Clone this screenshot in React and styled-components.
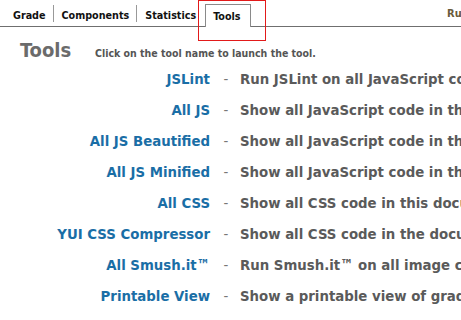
import React from "react";
import styled, { createGlobalStyle } from "styled-components";

const GlobalStyle = createGlobalStyle`
  body {
    margin: 0;
    background: #fff;
    font-family: "DejaVu Sans Condensed", "DejaVu Sans", sans-serif;
    font-weight: bold;
    overflow: hidden;
  }
`;

const Page = styled.div`
  width: 461px;
  height: 320px;
  overflow: hidden;
`;

const TabBar = styled.div`
  display: flex;
  align-items: flex-end;
  height: 26px;
  border-bottom: 1px solid #6f6f6f;
  padding-left: 5px;
`;

const Tab = styled.div`
  position: relative;
  font-size: 10.7px;
  color: #111;
  padding: 0 8px;
  height: 22px;
  line-height: 24px;

  &::after {
    content: "";
    display: ${(p) => (p.last ? "none" : "block")};
    position: absolute;
    right: 0;
    top: 1px;
    height: 17px;
    border-right: 1px solid #999;
  }
`;

const ActiveTab = styled.div`
  position: relative;
  font-size: 10.7px;
  color: #111;
  height: 22px;
  line-height: 23px;
  margin-left: 1px;
  margin-bottom: -1px;
  padding: 0 9px 0 7px;
  background: #fff;
  border: 1px solid #8a8a8a;
  border-bottom: none;
`;

const Highlight = styled.div`
  position: absolute;
  left: -8px;
  top: -5px;
  width: 66px;
  height: 39px;
  border: 1px solid #e21a1a;
  pointer-events: none;
`;

const Rules = styled.div`
  margin-left: auto;
  margin-right: -38px;
  align-self: center;
  font-size: 11px;
  color: #6a5a3a;
  white-space: nowrap;
`;

const Header = styled.div`
  display: flex;
  align-items: baseline;
  padding: 11px 0 0 20px;
  height: 32px;
  box-sizing: border-box;
`;

const Title = styled.h1`
  margin: 0;
  font-size: 20px;
  color: #6b6b6b;
  width: 75px;
`;

const Hint = styled.span`
  font-size: 10.5px;
  color: #555;
`;

const ToolList = styled.div`
  display: grid;
  grid-template-columns: 210px 30px 1fr;
  grid-auto-rows: 31px;
  margin-top: 4px;
  white-space: nowrap;
  font-size: 14.8px;
`;

const Name = styled.a`
  text-align: right;
  color: #1a6ea6;
  text-decoration: none;
  line-height: 31px;
`;

const Dash = styled.span`
  text-align: center;
  color: #777;
  font-weight: normal;
  line-height: 31px;
  padding-left: 2px;
`;

const Desc = styled.span`
  color: #5a5a5a;
  line-height: 31px;
  overflow: hidden;
`;

const tools = [
  ["JSLint", "Run JSLint on all JavaScript code in this document"],
  ["All JS", "Show all JavaScript code in this document"],
  ["All JS Beautified", "Show all JavaScript code in this document in an easy to read format"],
  ["All JS Minified", "Show all JavaScript code in this document in a minified format"],
  ["All CSS", "Show all CSS code in this document"],
  ["YUI CSS Compressor", "Show all CSS code in the document in a compressed format"],
  ["All Smush.it™", "Run Smush.it™ on all image components in this document"],
  ["Printable View", "Show a printable view of grades, component lists and statistics"],
];

export default function App() {
  return (
    <Page>
      <GlobalStyle />
      <TabBar>
        <Tab>Grade</Tab>
        <Tab>Components</Tab>
        <Tab last>Statistics</Tab>
        <ActiveTab>
          Tools
          <Highlight />
        </ActiveTab>
        <Rules>Rulesets:</Rules>
      </TabBar>
      <Header>
        <Title>Tools</Title>
        <Hint>Click on the tool name to launch the tool.</Hint>
      </Header>
      <ToolList>
        {tools.map(([name, desc]) => (
          <React.Fragment key={name}>
            <Name href="#">{name}</Name>
            <Dash>-</Dash>
            <Desc>{desc}</Desc>
          </React.Fragment>
        ))}
      </ToolList>
    </Page>
  );
}
